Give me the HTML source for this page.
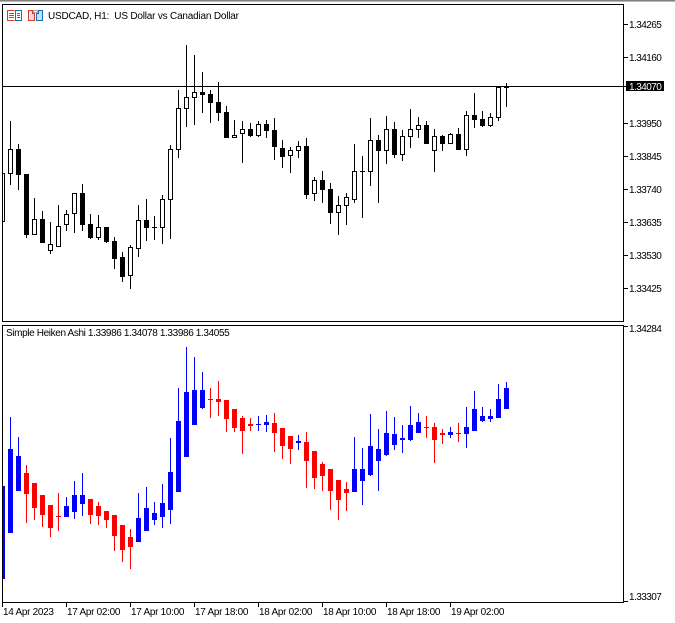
<!DOCTYPE html>
<html><head><meta charset="utf-8"><style>
html,body{margin:0;padding:0;background:#fff;width:675px;height:623px;overflow:hidden}
svg{display:block;position:absolute;left:0;top:0}
text{font-family:"Liberation Sans",sans-serif;font-size:10px;fill:#000;white-space:pre}
.n{letter-spacing:-.55px}
.t{letter-spacing:-.3px}
.h{letter-spacing:-.2px}
.i{letter-spacing:-.37px}
</style></head><body>
<svg width="675" height="623" viewBox="0 0 675 623" shape-rendering="crispEdges" fill="none">
<rect x="0" y="0" width="675" height="1" fill="#808080"/>
<rect x="0" y="1" width="675" height="1" fill="#b8b8b8"/>
<!-- frames -->
<path d="M2.5 4.5H623.5V321.5H2.5ZM2.5 325.5H623.5V602.5H2.5Z" stroke="#000"/>
<!-- top chart wicks -->
<path stroke="#000" d="M10.5 121V185M18.5 144V190M26.5 174V238M34.5 198V235M42.5 211V243M50.5 222V254M58.5 205V247M66.5 210V231M74.5 193V233M82.5 184V231M90.5 214V239M98.5 215V240M106.5 227V243M114.5 237V269M122.5 252V282M130.5 245V289M138.5 205V257M146.5 199V241M154.5 216V240M162.5 195V244M170.5 145V239M178.5 90V158M186.5 45V127M194.5 55V125M202.5 72V113M210.5 90V123M218.5 82V121M226.5 106V138M234.5 120V138M242.5 121V163M250.5 123V137M258.5 121V137M266.5 120V138M274.5 118V160M282.5 140V168M290.5 147V173M298.5 141V158M306.5 138V199M314.5 177V201M322.5 171V203M330.5 183V224M338.5 196V235M346.5 193V225M354.5 144V203M362.5 156V218M370.5 118V186M378.5 135V203M386.5 116V164M394.5 122V158M402.5 130V161M410.5 109V148M418.5 117V138M426.5 121V144M434.5 129V172M442.5 135V151M450.5 133V144M458.5 128V150M466.5 111V156M474.5 93V128M482.5 111V127M490.5 113V127M498.5 87V121M506.5 83V107"/>
<!-- dojis -->
<path stroke="#000" d="M152 227.5h5M360 171.5h5M504 87.5h5"/>
<!-- horizontal line -->
<path stroke="#000" d="M3 86.5H626"/>
<!-- bull bodies -->
<path stroke="#000" fill="#fff" d="M2.5 173.5H4.5V221.5H2.5ZM8.5 149.5h4V173.5h-4ZM32.5 219.5h4V234.5h-4ZM48.5 244.5h4V250.5h-4ZM56.5 226.5h4V246.5h-4ZM64.5 214.5h4V224.5h-4ZM72.5 193.5h4V213.5h-4ZM96.5 227.5h4V237.5h-4ZM128.5 247.5h4V275.5h-4ZM136.5 220.5h4V248.5h-4ZM160.5 199.5h4V227.5h-4ZM168.5 149.5h4V199.5h-4ZM176.5 108.5h4V149.5h-4ZM184.5 97.5h4V108.5h-4ZM192.5 92.5h4V97.5h-4ZM232.5 135.5h4V137.5h-4ZM240.5 129.5h4V133.5h-4ZM256.5 124.5h4V135.5h-4ZM288.5 150.5h4V155.5h-4ZM296.5 146.5h4V150.5h-4ZM312.5 180.5h4V193.5h-4ZM336.5 205.5h4V212.5h-4ZM344.5 197.5h4V205.5h-4ZM352.5 171.5h4V199.5h-4ZM368.5 140.5h4V171.5h-4ZM384.5 129.5h4V150.5h-4ZM400.5 136.5h4V154.5h-4ZM408.5 129.5h4V136.5h-4ZM416.5 125.5h4V129.5h-4ZM432.5 136.5h4V150.5h-4ZM448.5 134.5h4V143.5h-4ZM464.5 115.5h4V149.5h-4ZM488.5 117.5h4V125.5h-4ZM496.5 87.5h4V117.5h-4Z"/>
<!-- bear bodies -->
<path fill="#000" d="M16 149h5V175h-5ZM24 174h5V235h-5ZM40 219h5V243h-5ZM80 193h5V225h-5ZM88 224h5V238h-5ZM104 227h5V242h-5ZM112 241h5V259h-5ZM120 257h5V277h-5ZM144 220h5V228h-5ZM200 92h5V95h-5ZM208 94h5V103h-5ZM216 102h5V113h-5ZM224 112h5V138h-5ZM248 129h5V136h-5ZM264 124h5V131h-5ZM272 130h5V147h-5ZM280 148h5V157h-5ZM304 146h5V195h-5ZM320 180h5V190h-5ZM328 189h5V213h-5ZM376 140h5V151h-5ZM392 129h5V155h-5ZM424 125h5V144h-5ZM440 136h5V144h-5ZM456 134h5V150h-5ZM472 115h5V120h-5ZM480 119h5V126h-5Z"/>
<!-- bottom blue -->
<path stroke="#00f" d="M10.5 417V533M18.5 437V491M66.5 497V517M74.5 481V519M82.5 473V516M138.5 493V542M146.5 487V531M154.5 502V525M162.5 484V528M170.5 438V524M178.5 388V492M186.5 347V457M194.5 357V425M202.5 372V409M258.5 416V431M266.5 415V432M298.5 435V450M354.5 437V492M362.5 448V505M370.5 414V476M378.5 429V491M386.5 411V456M394.5 417V450M402.5 425V453M410.5 406V441M418.5 413V433M450.5 427V438M466.5 407V448M474.5 391V431M482.5 407V422M490.5 409V422M498.5 384V418M506.5 382V409M256 424.5h5"/>
<path fill="#00f" d="M3 486h2V579h-2ZM8 449h5V533h-5ZM16 456h5V491h-5ZM64 506h5V517h-5ZM72 495h5V512h-5ZM80 495h5V504h-5ZM136 518h5V542h-5ZM144 508h5V531h-5ZM152 513h5V520h-5ZM160 503h5V517h-5ZM168 472h5V510h-5ZM176 421h5V492h-5ZM184 392h5V457h-5ZM192 390h5V425h-5ZM200 390h5V408h-5ZM264 422h5V425h-5ZM296 441h5V443h-5ZM352 469h5V492h-5ZM360 469h5V481h-5ZM368 446h5V475h-5ZM376 449h5V461h-5ZM384 433h5V455h-5ZM392 434h5V445h-5ZM400 438h5V440h-5ZM408 425h5V440h-5ZM416 422h5V433h-5ZM448 432h5V435h-5ZM464 427h5V434h-5ZM472 409h5V431h-5ZM480 416h5V421h-5ZM488 416h5V419h-5ZM496 399h5V418h-5ZM504 388h5V409h-5Z"/>
<!-- bottom red -->
<path stroke="#f00" d="M26.5 465V523M34.5 483V520M42.5 495V527M50.5 505V537M58.5 493V531M90.5 499V524M98.5 502V525M106.5 511V528M114.5 515V551M122.5 525V562M130.5 529V569M210.5 388V418M218.5 381V416M226.5 400V432M234.5 409V432M242.5 416V454M250.5 418V431M274.5 413V452M282.5 428V459M290.5 436V464M306.5 432V488M314.5 451V489M322.5 462V491M330.5 469V510M338.5 480V520M346.5 482V511M426.5 416V438M434.5 423V463M442.5 429V444M458.5 423V442M56 516.5h5M208 399.5h5M424 427.5h5M456 433.5h5"/>
<path fill="#f00" d="M24 473h5V494h-5ZM32 483h5V508h-5ZM40 495h5V515h-5ZM48 505h5V528h-5ZM88 499h5V515h-5ZM96 506h5V516h-5ZM104 511h5V520h-5ZM112 515h5V536h-5ZM120 525h5V550h-5ZM128 537h5V547h-5ZM216 399h5V402h-5ZM224 400h5V419h-5ZM232 409h5V428h-5ZM240 418h5V431h-5ZM248 424h5V426h-5ZM272 423h5V433h-5ZM280 428h5V446h-5ZM288 436h5V449h-5ZM304 442h5V461h-5ZM312 451h5V478h-5ZM320 464h5V476h-5ZM328 469h5V491h-5ZM336 480h5V500h-5ZM344 489h5V493h-5ZM432 427h5V440h-5ZM440 433h5V435h-5Z"/>
<!-- axis ticks -->
<path stroke="#000" d="M624 24.5h4M624 57.5h4M624 123.5h4M624 156.5h4M624 189.5h4M624 222.5h4M624 255.5h4M624 288.5h4M624 326.5h4M624 601.5h4M2.5 603v4M66.5 603v4M130.5 603v4M194.5 603v4M258.5 603v4M322.5 603v4M386.5 603v4M450.5 603v4"/>
<!-- icon 1 -->
<path fill="#fff" d="M8 10h14v11H8z"/>
<path stroke="#e2352b" d="M14.5 10.5H7.5V20.5H14.5M9 13.5h5M9 15.5h5M9 17.5h5"/>
<path stroke="#1a6fb4" d="M15.5 10.5H21.5V20.5H15.5ZM17 13.5h3M17 15.5h3M17 17.5h3"/>
<!-- icon 2 -->
<path fill="#fcd9cf" stroke="#e2352b" d="M28.5 10.5H32.5V13.5H34.5V20.5H28.5Z"/>
<path fill="#bfe3f8" stroke="#1a6fb4" d="M36.5 13.5H38.5V10.5H42.5V20.5H36.5Z"/>
<path fill="#fff" stroke="#a8a8a8" d="M33.5 10.5H37.5V12.5H33.5Z"/>
<!-- price tag -->
<rect x="626" y="81" width="38" height="10" fill="#000"/>
</svg>
<svg width="675" height="623" viewBox="0 0 675 623">
<text x="48" y="19" class="h">USDCAD, H1:  US Dollar vs Canadian Dollar</text>
<text x="6" y="336" class="i">Simple Heiken Ashi 1.33986 1.34078 1.33986 1.34055</text>
<text x="629" y="28" class="n">1.34265</text>
<text x="629" y="61" class="n">1.34160</text>
<text x="629" y="127" class="n">1.33950</text>
<text x="629" y="160" class="n">1.33845</text>
<text x="629" y="193" class="n">1.33740</text>
<text x="629" y="226" class="n">1.33635</text>
<text x="629" y="259" class="n">1.33530</text>
<text x="629" y="292" class="n">1.33425</text>
<text x="629" y="332" class="n">1.34284</text>
<text x="629" y="600" class="n">1.33307</text>
<text x="629" y="90" class="n" style="fill:#fff">1.34070</text>
<text x="3" y="615" class="t">14 Apr 2023</text>
<text x="67" y="615" class="t">17 Apr 02:00</text>
<text x="131" y="615" class="t">17 Apr 10:00</text>
<text x="195" y="615" class="t">17 Apr 18:00</text>
<text x="259" y="615" class="t">18 Apr 02:00</text>
<text x="323" y="615" class="t">18 Apr 10:00</text>
<text x="387" y="615" class="t">18 Apr 18:00</text>
<text x="451" y="615" class="t">19 Apr 02:00</text>
</svg>
</body></html>
